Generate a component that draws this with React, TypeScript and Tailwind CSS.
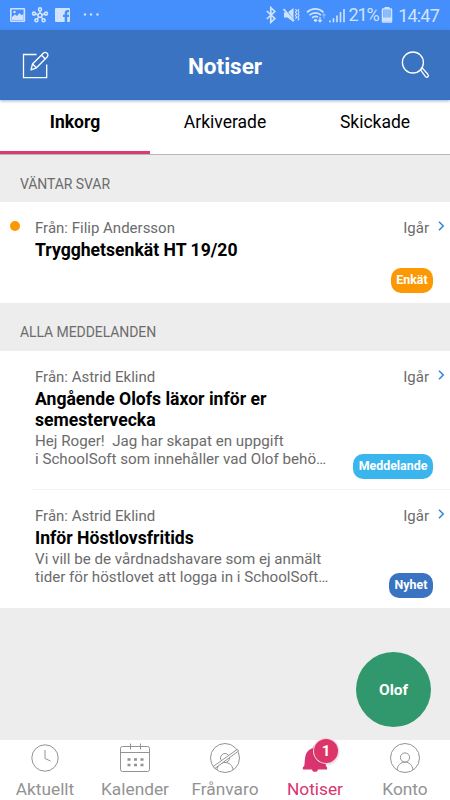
import { clsx } from "clsx";
import type { ReactNode } from "react";

type Message = {
  from: string;
  title: string[];
  body?: string[];
  date: string;
  label: string;
  labelClass: string;
  unread?: boolean;
};

const waiting: Message[] = [
  {
    from: "Filip Andersson",
    title: ["Trygghetsenkät HT 19/20"],
    date: "Igår",
    label: "Enkät",
    labelClass: "w-[42px] bg-[#fb9804]",
    unread: true,
  },
];

const messages: Message[] = [
  {
    from: "Astrid Eklind",
    title: ["Angående Olofs läxor inför er", "semestervecka"],
    body: ["Hej Roger!  Jag har skapat en uppgift", "i SchoolSoft som innehåller vad Olof behö…"],
    date: "Igår",
    label: "Meddelande",
    labelClass: "w-[80px] bg-[#3ab5ee]",
  },
  {
    from: "Astrid Eklind",
    title: ["Inför Höstlovsfritids"],
    body: ["Vi vill be de vårdnadshavare som ej anmält", "tider för höstlovet att logga in i SchoolSoft…"],
    date: "Igår",
    label: "Nyhet",
    labelClass: "w-[44px] bg-[#3973c2]",
  },
];

function StatusBar() {
  return (
    <div className="flex h-[30px] items-center justify-between bg-[#448ffb] pr-[11px] pl-[10px] text-[#cfe3fe]">
      <svg width="92" height="16" viewBox="0 0 92 16" fill="none">
        {/* gallery */}
        <rect x="0.8" y="1.8" width="13.6" height="12.4" rx="0.5" stroke="currentColor" strokeWidth="1.6" />
        <path d="M2 13V10l3-2.500 2 1.500 2.500-3 2 2.200L13.500 7v6z" fill="currentColor" />
        <circle cx="4.500" cy="5" r="1.200" fill="currentColor" />
        {/* hub */}
        <g stroke="currentColor" strokeWidth="1.600">
          <circle cx="30" cy="8.300" r="2" />
          <circle cx="30" cy="2.400" r="1.500" />
          <circle cx="24" cy="6.600" r="1.500" />
          <circle cx="36" cy="6.600" r="1.500" />
          <circle cx="26.400" cy="13.300" r="1.500" />
          <circle cx="33.600" cy="13.300" r="1.500" />
          <path d="M30 4.200v2M25.600 7.100l2.400.6M34.400 7.100l-2.400.6M27.400 11.900l1.300-1.800M32.600 11.900l-1.300-1.800" />
        </g>
        {/* facebook */}
        <path
          d="M46 1h13a1 1 0 0 1 1 1v12a1 1 0 0 1-1 1h-1.800v-5h1.800v-2.200h-1.800V6.600c0-.9.400-1.300 1.300-1.300h.6V3.100h-1.200c-2.100 0-3.200 1.100-3.200 3.100v1.600H53V10h1.700v5H46a1 1 0 0 1-1-1V2a1 1 0 0 1 1-1z"
          fill="currentColor"
        />
        <g fill="currentColor">
          <circle cx="75" cy="7.500" r="1.200" />
          <circle cx="81" cy="7.500" r="1.200" />
          <circle cx="87.500" cy="7.500" r="1.200" />
        </g>
      </svg>
      <div className="flex items-center">
        <svg className="mr-px" width="80" height="18" viewBox="0 0 80 18" fill="none" stroke="currentColor">
          {/* bluetooth */}
          <path d="M.8 5l8 7.500-4 3.800V1.700l4 3.800-8 7.500" strokeWidth="1.700" />
          {/* muted speaker */}
          <path d="M18 6.500h3.500l6-4.500v14l-6-4.500H18z" fill="currentColor" stroke="none" />
          <path d="M18.800 2.300l9 12" stroke="#448ffb" strokeWidth="1.200" />
          <path d="M17.500 3l10.500 12" strokeWidth="1.800" />
          <path d="M29.500 3l1.200 1.700-1.200 1.600 1.200 1.600-1.200 1.600 1.200 1.700-1.200 1.600M33 3l-1 1.700 1 1.600-1 1.600 1 1.600-1 1.700 1 1.600-1 1.600" strokeWidth="1.100" />
          {/* wifi */}
          <path d="M41 6.300c4.700-4.500 11.800-4.500 16.500 0M43.500 9.100c3.300-3.100 8.300-3.100 11.500 0M46.100 11.900c1.600-1.600 4-1.900 6-.9" strokeWidth="1.700" />
          <circle cx="49.500" cy="14.300" r="1.600" fill="currentColor" stroke="none" />
          <path d="M54 11v4.700M52.300 14l1.700 1.800 1.700-1.800" strokeWidth="1.300" />
          <path d="M58 12.500V8M56.500 9.500L58 7.800l1.500 1.700" strokeWidth="1.200" opacity=".5" />
          {/* signal */}
          <path d="M64 16.200v-1.700M67.500 16.200v-4M71 16.200V9.500M74.500 16.200V6M78 16.200V3" strokeWidth="1.600" />
        </svg>
        <span className="w-[33px] text-center text-[18px] leading-[30px] tracking-[-1.2px] whitespace-nowrap">21%</span>
        <svg className="ml-px" width="12" height="16" viewBox="0 0 12 16" fill="none">
          <path d="M3.500 0h5v2h-5z" fill="currentColor" />
          <rect x="1.500" y="2" width="9" height="13" rx="0.500" stroke="currentColor" strokeWidth="1.500" />
          <rect x="2.300" y="2.800" width="7.400" height="7.500" fill="#8dbcfc" />
          <path d="M2 10.300h8v4H2z" fill="currentColor" />
        </svg>
        <span className="ml-[4px] w-[42px] text-right text-[18px] leading-[31px] tracking-[-0.8px] whitespace-nowrap">14:47</span>
      </div>
    </div>
  );
}

function Header() {
  return (
    <header className="relative z-10 flex h-[70px] items-center justify-between bg-[#3973c2] pr-[19px] pl-[22px] text-white shadow-[0_1px_3px_rgba(57,115,194,0.55)]">
      <svg width="28" height="28" viewBox="0 0 28 28" fill="none" stroke="currentColor" strokeWidth="1.300">
        <path d="M14.500 3.500H1.500v23.200h23.200V13.500" />
        <path d="M9 18.800l1.500-5.800L21.300 2.300c1.200-1.200 2.700-1 3.800 0s1.100 2.500 0 3.700L14.500 16.800z" strokeLinejoin="round" />
        <path d="M19.500 4.200l3.800 3.800M10.500 13l4 3.800" />
      </svg>
      <h1 className="mr-px pt-[3px] text-[22.500px] font-bold">Notiser</h1>
      <svg width="30" height="28" viewBox="0 0 30 28" fill="none" stroke="currentColor" strokeWidth="1.300">
        <circle cx="11.900" cy="11.500" r="10.500" />
        <path d="M19.500 18.800l1.900-1.700 5.500 6.200c1.500 1.900-.7 4-2.400 2.300z" strokeLinejoin="round" />
      </svg>
    </header>
  );
}

function Tabs() {
  return (
    <div className="grid h-[55px] grid-cols-3 border-b border-[#b7b7b7] bg-white text-center text-[17.500px] leading-[44px] text-black">
      <div className="-mb-px h-[54px] border-b-[3px] border-[#dc3a72] font-bold">Inkorg</div>
      <div>Arkiverade</div>
      <div>Skickade</div>
    </div>
  );
}

function SectionTitle({ children, className }: { children: ReactNode; className?: string }) {
  return (
    <h2 className={clsx("pl-5 text-[14px] leading-[58px] tracking-[-0.08px] text-[#6c6c6c]", className)}>{children}</h2>
  );
}

function MessageRow({ message, className }: { message: Message; className?: string }) {
  return (
    <div className={clsx("relative flex bg-white pt-4 text-[15px] text-[#6b6b6b]", className)}>
      <div className="w-[35px] shrink-0 pt-[3px] pl-[10px]">
        {message.unread && <div className="size-[10px] rounded-full bg-[#fb9804]" />}
      </div>
      <div className="min-w-0 flex-1 whitespace-pre">
        <div className="h-[22px] leading-[20px]">Från: {message.from}</div>
        <div className="text-[17.600px] leading-[21px] font-bold text-black">
          {message.title.map((line) => (
            <div key={line}>{line}</div>
          ))}
        </div>
        <div className="pt-px text-[15.150px] leading-[18px]">
          {message.body?.map((line) => (
            <div key={line}>{line}</div>
          ))}
        </div>
      </div>
      <div className="flex h-5 items-start pr-[5px]">
        <span className="leading-[20px]">{message.date}</span>
        <svg className="mt-[3px] ml-[9px]" width="7" height="10" viewBox="0 0 7 10" fill="none">
          <path d="M1 .8L5.200 5 1 9.200" stroke="#3b86dc" strokeWidth="1.600" />
        </svg>
      </div>
      <span
        className={clsx(
          "absolute right-[17px] bottom-[10px] h-[25px] rounded-[10px] text-center text-[12.400px] leading-[24px] font-bold text-white",
          message.labelClass,
        )}
      >
        {message.label}
      </span>
    </div>
  );
}

function NavItem({ label, active, children }: { label: string; active?: boolean; children: ReactNode }) {
  return (
    <div className={clsx("flex flex-col items-center pt-[2px]", active ? "text-[#d93470]" : "text-[#939393]")}>
      <div className="relative size-8">{children}</div>
      <span className="text-[17.300px] leading-[31px]">{label}</span>
    </div>
  );
}

function BottomNav() {
  return (
    <nav className="grid h-[60px] grid-cols-5 bg-white">
      <NavItem label="Aktuellt">
        <svg viewBox="0 0 32 32" fill="none" stroke="currentColor">
          <circle cx="16" cy="16" r="13.200" />
          <path d="M16 8v8.500l5.500 2.500" />
        </svg>
      </NavItem>
      <NavItem label="Kalender">
        <svg viewBox="0 0 32 32" fill="none" stroke="currentColor">
          <rect x="1.500" y="4.500" width="29" height="25" rx="2" />
          <path d="M1.500 10.500h29M11.500 1.500v6M21.500 1.500v6" />
          <path d="M8.500 17.500h3M15 17.500h3M21.500 17.500h3M8.500 23h3M15 23h3M21.500 23h3" strokeWidth="2.600" />
        </svg>
      </NavItem>
      <NavItem label="Frånvaro">
        <svg viewBox="0 0 32 32" fill="none" stroke="currentColor">
          <circle cx="16" cy="16" r="14.500" />
          <circle cx="16" cy="16" r="4.500" />
          <path d="M8 28c.5-5 4-7.500 8-7.500s7.500 2.500 8 7.500" />
          <path d="M4.200 24.500L28.300 7.300l1.200 1.700L5.800 26.500z" fill="white" />
        </svg>
      </NavItem>
      <NavItem label="Notiser" active>
        <svg viewBox="0 0 32 32" fill="currentColor">
          <path d="M4 27.500c-.6-1.700 0-2.600 1.200-3.400.8-4.200.3-9.500 2.300-13 1.500-2.800 4-4.300 6.500-5l1-2.600h3l1 2.600c4.500 1.500 7 5 7.300 9.500.3 4-.1 6.200.7 8.500 1.100.8 1.500 1.700.9 3.400H19c-.2 1.500-1.300 2.300-3 2.300s-2.800-.8-3-2.300z" />
        </svg>
        <span className="absolute -top-[3px] left-[15px] size-6 rounded-full bg-[#dc3569] text-center text-[15px] leading-[24px] font-bold text-white shadow-[0_0_0_1px_#f6d5e0,0_1px_3px_rgba(0,0,0,0.3)]">
          1
        </span>
      </NavItem>
      <NavItem label="Konto">
        <svg viewBox="0 0 32 32" fill="none" stroke="currentColor">
          <circle cx="16" cy="16" r="14.500" />
          <circle cx="16" cy="15.500" r="4.600" />
          <path d="M8 28c.5-5 4-7.900 8-7.900s7.500 2.900 8 7.900" />
        </svg>
      </NavItem>
    </nav>
  );
}

export default function App() {
  return (
    <div className="relative flex h-[800px] w-[450px] flex-col overflow-hidden bg-[#ededed] font-[Roboto,sans-serif]">
      <StatusBar />
      <Header />
      <Tabs />
      <main className="flex-1">
        <SectionTitle className="h-[47px]">VÄNTAR SVAR</SectionTitle>
        <MessageRow message={waiting[0]} className="h-[101px]" />
        <SectionTitle className="h-[48px]">ALLA MEDDELANDEN</SectionTitle>
        <MessageRow message={messages[0]} className="h-[138px]" />
        <div className="h-px bg-white pl-8">
          <div className="h-px bg-[#f4f4f4]" />
        </div>
        <MessageRow message={messages[1]} className="h-[118px]" />
      </main>
      <button className="absolute right-[19px] bottom-[73px] size-[75px] rounded-full bg-[#30986c] pt-[2px] text-[15.500px] font-bold text-white">
        Olof
      </button>
      <BottomNav />
    </div>
  );
}
